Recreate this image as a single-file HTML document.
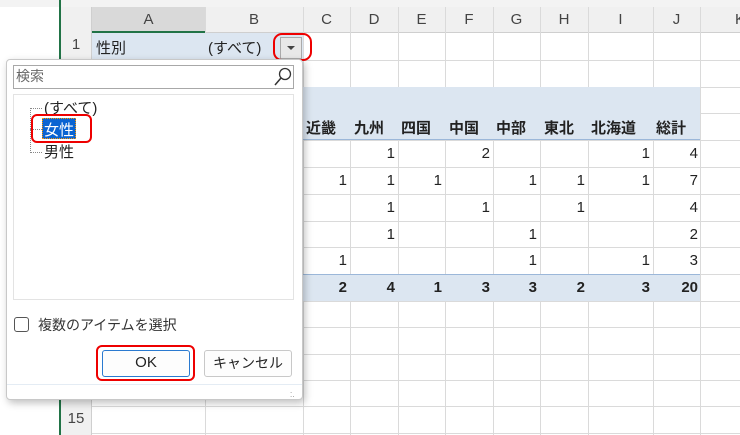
<!DOCTYPE html><html><head><meta charset="utf-8"><style>
*{margin:0;padding:0;box-sizing:border-box}
body{width:740px;height:435px;overflow:hidden;background:#fff;font-family:"Liberation Sans","Noto Sans CJK JP",sans-serif;position:relative;font-size:14px;color:#222}
.a{position:absolute}
.vl{position:absolute;top:7px;bottom:0;width:1px;background:#dadada}
.hl{position:absolute;left:92px;right:0;height:1px;background:#dadada}
.ch{position:absolute;top:7px;height:26px;text-align:center;line-height:26px;font-size:15px;color:#444}
.rh{position:absolute;left:60px;width:32px;text-align:center;color:#444;font-size:15px}
.n{position:absolute;text-align:right;font-size:15px}
</style></head><body>
<div class="a" style="left:0;top:0;width:740px;height:7px;background:#f3f3f3"></div>
<div class="a" style="left:60px;top:7px;width:680px;height:26px;background:#f0f0f0;border-bottom:1px solid #cfcfcf"></div>
<div class="a" style="left:60px;top:7px;width:32px;height:428px;background:#f0f0f0;border-right:1px solid #cfcfcf"></div>
<div class="a" style="left:59px;top:0;width:2px;height:435px;background:#217346"></div>
<div class="a" style="left:92px;top:7px;width:113px;height:26px;background:#d9d9d9;border-bottom:2px solid #217346"></div>
<!-- grid -->
<div class="vl" style="left:205px"></div><div class="vl" style="left:303px"></div><div class="vl" style="left:350px"></div><div class="vl" style="left:398px"></div><div class="vl" style="left:445px"></div><div class="vl" style="left:493px"></div><div class="vl" style="left:540px"></div><div class="vl" style="left:588px"></div><div class="vl" style="left:653px"></div><div class="vl" style="left:700px"></div>
<div class="hl" style="top:60px"></div><div class="hl" style="top:87px"></div><div class="hl" style="top:113px"></div><div class="hl" style="top:140px"></div><div class="hl" style="top:167px"></div><div class="hl" style="top:194px"></div><div class="hl" style="top:221px"></div><div class="hl" style="top:247px"></div><div class="hl" style="top:274px"></div><div class="hl" style="top:301px"></div><div class="hl" style="top:327px"></div><div class="hl" style="top:354px"></div><div class="hl" style="top:380px"></div><div class="hl" style="top:406px"></div><div class="hl" style="top:433px"></div>
<div class="ch" style="left:92px;width:113px">A</div><div class="ch" style="left:205px;width:98px">B</div><div class="ch" style="left:303px;width:47px">C</div><div class="ch" style="left:350px;width:48px">D</div><div class="ch" style="left:398px;width:47px">E</div><div class="ch" style="left:445px;width:48px">F</div><div class="ch" style="left:493px;width:47px">G</div><div class="ch" style="left:540px;width:48px">H</div><div class="ch" style="left:588px;width:65px">I</div><div class="ch" style="left:653px;width:47px">J</div><div class="ch" style="left:730px;width:20px">K</div>
<div class="rh" style="top:36px">1</div><div class="rh" style="top:383px">14</div><div class="rh" style="top:410px">15</div>
<!-- row1 -->
<div class="a" style="left:92px;top:33px;width:211px;height:27px;background:#dce6f1"></div>
<div class="a" style="left:96px;top:37px;font-size:15px">性別</div>
<div class="a" style="left:208px;top:37px;font-size:15px">(すべて)</div>
<div class="a" style="left:280px;top:37px;width:22px;height:22px;background:#e8e8e8;border:1px solid #aaa"></div>
<div class="a" style="left:287px;top:46px;border-left:4px solid transparent;border-right:4px solid transparent;border-top:4px solid #444"></div>
<div class="a" style="left:273px;top:33px;width:39px;height:28px;border:2px solid #e00;border-radius:9px"></div>
<!-- pivot -->
<div class="a" style="left:303px;top:87px;width:397px;height:53px;background:#dce6f1;border-bottom:1px solid #9bb7d9"></div>
<div class="a" style="left:303px;top:274px;width:397px;height:27px;background:#dce6f1;border-top:1px solid #9bb7d9"></div>
<div class="a" style="left:306px;top:117px;font-weight:bold;font-size:15px;word-spacing:0">近畿</div>
<div class="a" style="left:354px;top:117px;font-weight:bold;font-size:15px">九州</div>
<div class="a" style="left:401px;top:117px;font-weight:bold;font-size:15px">四国</div>
<div class="a" style="left:449px;top:117px;font-weight:bold;font-size:15px">中国</div>
<div class="a" style="left:496px;top:117px;font-weight:bold;font-size:15px">中部</div>
<div class="a" style="left:544px;top:117px;font-weight:bold;font-size:15px">東北</div>
<div class="a" style="left:591px;top:117px;font-weight:bold;font-size:15px">北海道</div>
<div class="a" style="left:656px;top:117px;font-weight:bold;font-size:15px">総計</div>
<div class="n" style="left:350px;width:45px;top:145px">1</div><div class="n" style="left:445px;width:45px;top:145px">2</div><div class="n" style="left:588px;width:62px;top:145px">1</div><div class="n" style="left:653px;width:45px;top:145px">4</div>
<div class="n" style="left:303px;width:44px;top:172px">1</div><div class="n" style="left:350px;width:45px;top:172px">1</div><div class="n" style="left:398px;width:44px;top:172px">1</div><div class="n" style="left:493px;width:44px;top:172px">1</div><div class="n" style="left:540px;width:45px;top:172px">1</div><div class="n" style="left:588px;width:62px;top:172px">1</div><div class="n" style="left:653px;width:45px;top:172px">7</div>
<div class="n" style="left:350px;width:45px;top:199px">1</div><div class="n" style="left:445px;width:45px;top:199px">1</div><div class="n" style="left:540px;width:45px;top:199px">1</div><div class="n" style="left:653px;width:45px;top:199px">4</div>
<div class="n" style="left:350px;width:45px;top:226px">1</div><div class="n" style="left:493px;width:44px;top:226px">1</div><div class="n" style="left:653px;width:45px;top:226px">2</div>
<div class="n" style="left:303px;width:44px;top:252px">1</div><div class="n" style="left:493px;width:44px;top:252px">1</div><div class="n" style="left:588px;width:62px;top:252px">1</div><div class="n" style="left:653px;width:45px;top:252px">3</div>
<div style="font-weight:bold">
<div class="n" style="left:303px;width:44px;top:279px">2</div><div class="n" style="left:350px;width:45px;top:279px">4</div><div class="n" style="left:398px;width:44px;top:279px">1</div><div class="n" style="left:445px;width:45px;top:279px">3</div><div class="n" style="left:493px;width:44px;top:279px">3</div><div class="n" style="left:540px;width:45px;top:279px">2</div><div class="n" style="left:588px;width:62px;top:279px">3</div><div class="n" style="left:653px;width:45px;top:279px">20</div></div>
<!-- dialog -->
<div class="a" style="left:6px;top:59px;width:297px;height:341px;background:#fff;border:1px solid #c8c8c8;border-radius:4px;box-shadow:2px 3px 8px rgba(0,0,0,.25)"></div>
<div class="a" style="left:13px;top:65px;width:281px;height:24px;border:1px solid #a8a8a8"></div>
<div class="a" style="left:16px;top:66px;color:#666;font-size:14px">検索</div>
<svg class="a" style="left:274px;top:67px" width="18" height="20"><circle cx="11" cy="7" r="5.5" fill="none" stroke="#333" stroke-width="1.3"/><line x1="7" y1="11" x2="1" y2="18" stroke="#333" stroke-width="1.5"/></svg>
<div class="a" style="left:13px;top:94px;width:281px;height:206px;border:1px solid #e3e3e3"></div>
<div class="a" style="left:30px;top:108px;width:1px;height:45px;border-left:1px dotted #888"></div>
<div class="a" style="left:30px;top:108px;width:12px;border-top:1px dotted #888"></div>
<div class="a" style="left:30px;top:129px;width:12px;border-top:1px dotted #888"></div>
<div class="a" style="left:30px;top:152px;width:12px;border-top:1px dotted #888"></div>
<div class="a" style="left:44px;top:97px;font-size:15px">(すべて)</div>
<div class="a" style="left:42px;top:118px;width:34px;height:21px;background:#0a64d2;border:1px dotted #f90"></div>
<div class="a" style="left:44px;top:119px;font-size:15px;color:#fff">女性</div>
<div class="a" style="left:44px;top:141px;font-size:15px">男性</div>
<div class="a" style="left:31px;top:114px;width:61px;height:29px;border:2px solid #e00;border-radius:6px"></div>
<div class="a" style="left:14px;top:317px;width:15px;height:15px;border:1.5px solid #555;border-radius:3px"></div>
<div class="a" style="left:38px;top:315px;font-size:14px;color:#333">複数のアイテムを選択</div>
<div class="a" style="left:96px;top:345px;width:99px;height:36px;border:2px solid #e00;border-radius:6px"></div>
<div class="a" style="left:102px;top:350px;width:88px;height:27px;border:1.5px solid #2a7ad0;border-radius:3px;background:#fdfdfd;text-align:center;line-height:24px;font-size:15px">OK</div>
<div class="a" style="left:204px;top:350px;width:88px;height:27px;border:1px solid #c8c8c8;border-radius:3px;background:#fdfdfd;text-align:center;line-height:25px;font-size:14px">キャンセル</div>
<div class="a" style="left:7px;top:384px;width:295px;height:1px;background:#e4ecf4"></div>
<div class="a" style="left:290px;top:389px;color:#888;font-size:8px;line-height:4px">.<br>..</div>
</body></html>
